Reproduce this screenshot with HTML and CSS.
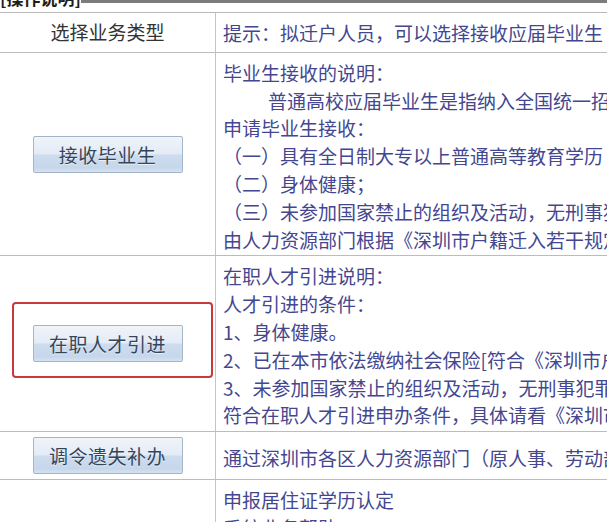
FILE: index.html
```html
<!DOCTYPE html>
<html lang="zh-CN">
<head>
<meta charset="utf-8">
<title>操作说明</title>
<link rel="stylesheet" href="styles.css">
</head>
<body>
<div class="page">
  <div class="caption">
    <span class="caption-text">[操作说明]</span>
    <div class="caption-rule"></div>
  </div>
  <table class="ops">
    <tr class="head">
      <td class="type type-title">选择业务类型</td>
      <td class="desc"><p>提示：拟迁户人员，可以选择接收应届毕业生</p></td>
    </tr>
    <tr>
      <td class="type"><button class="btn" type="button">接收毕业生</button></td>
      <td class="desc">
        <p>毕业生接收的说明：</p>
        <p class="indent">普通高校应届毕业生是指纳入全国统一招生计划的毕业生。</p>
        <p>申请毕业生接收：</p>
        <p>（一）具有全日制大专以上普通高等教育学历</p>
        <p>（二）身体健康；</p>
        <p>（三）未参加国家禁止的组织及活动，无刑事犯罪记录。</p>
        <p>由人力资源部门根据《深圳市户籍迁入若干规定》办理。</p>
      </td>
    </tr>
    <tr>
      <td class="type type-marked">
        <button class="btn" type="button">在职人才引进</button>
        <span class="mark"></span>
      </td>
      <td class="desc">
        <p>在职人才引进说明：</p>
        <p>人才引进的条件：</p>
        <p>1、身体健康。</p>
        <p>2、已在本市依法缴纳社会保险[符合《深圳市户籍迁入若干规定》]</p>
        <p>3、未参加国家禁止的组织及活动，无刑事犯罪记录。</p>
        <p>符合在职人才引进申办条件，具体请看《深圳市户籍迁入若干规定》</p>
      </td>
    </tr>
    <tr>
      <td class="type"><button class="btn" type="button">调令遗失补办</button></td>
      <td class="desc"><p>通过深圳市各区人力资源部门（原人事、劳动部门）办理调令遗失补办。</p></td>
    </tr>
    <tr>
      <td class="type"></td>
      <td class="desc">
        <p>申报居住证学历认定</p>
        <p>系统业务帮助</p>
      </td>
    </tr>
  </table>
</div>
</body>
</html>
```

FILE: styles.css
```css
* {
  box-sizing: border-box;
}

html,
body {
  margin: 0;
  padding: 0;
  background: #ffffff;
  overflow: hidden;
}

body {
  font-family: "Noto Sans CJK SC", "Noto Sans", sans-serif;
}

.page {
  width: 1000px;
}

.caption {
  display: flex;
  height: 13px;
  overflow: hidden;
  border-bottom: 1px solid #b9b9b9;
}

.caption-text {
  display: block;
  margin-top: -11px;
  font-size: 17px;
  line-height: 18px;
  font-weight: 700;
  color: #1e1e1e;
  white-space: nowrap;
}

.caption-rule {
  flex: 1;
  height: 3px;
  background: #7c7c7c;
}

.ops {
  width: 1000px;
  table-layout: fixed;
  border-collapse: separate;
  border-spacing: 0;
}

.ops td {
  padding: 0;
  border-bottom: 1px solid #bcbcbc;
  vertical-align: middle;
}

.type {
  width: 216px;
  border-right: 1px solid #c4c4c4;
  text-align: center;
}

.type-title {
  font-size: 19px;
  color: #333333;
  line-height: 28px;
}

.type-marked {
  position: relative;
}

.desc {
  padding: 6px 7px 2px 7px !important;
  color: #44478f;
  font-size: 19px;
  line-height: 27.8px;
  white-space: nowrap;
}

.head .desc {
  padding: 6px 7px 5px 7px !important;
}

.desc p {
  margin: 0;
}

.indent {
  padding-left: 45px;
}

.btn {
  display: inline-block;
  width: 150px;
  height: 37px;
  margin: 5px 0;
  padding: 0;
  border: 1px solid #a4b5c9;
  border-radius: 2px;
  background: linear-gradient(to bottom, #f0f4fa 0%, #e3ebf5 48%, #cddcee 52%, #c7d7eb 88%, #d5e2f0 100%);
  color: #34465c;
  font-family: "Noto Sans CJK SC", "Noto Sans", sans-serif;
  font-size: 19px;
  line-height: 35px;
  letter-spacing: 0.5px;
  text-shadow: 0 1px 0 rgba(255, 255, 255, 0.6);
}

.mark {
  position: absolute;
  left: 12px;
  top: 46px;
  width: 201px;
  height: 76px;
  border: 2px solid #c9383a;
  border-radius: 4px;
  pointer-events: none;
}
```
